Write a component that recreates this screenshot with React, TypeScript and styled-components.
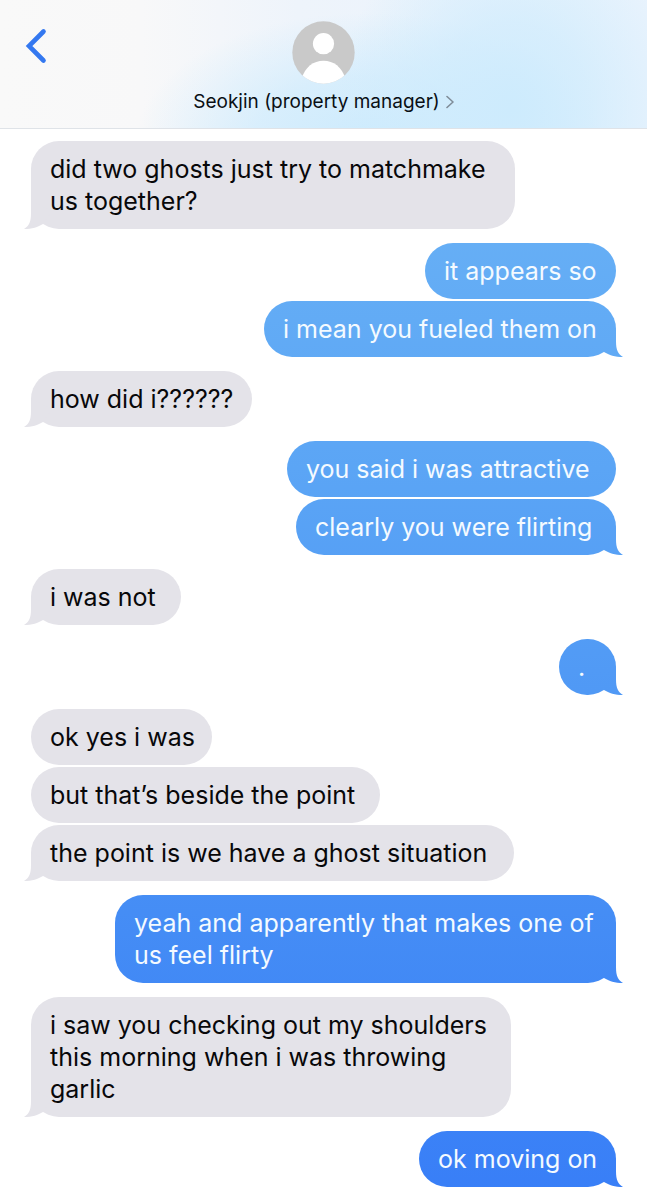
import React from "react";
import styled, { createGlobalStyle, css } from "styled-components";

const GlobalStyle = createGlobalStyle`
  *, *::before, *::after { box-sizing: border-box; }
  body {
    margin: 0;
    background: #fff;
    color: #000;
    font-family: Inter, "Liberation Sans", sans-serif;
  }
`;

const Page = styled.div`
  display: flex;
  flex-direction: column;
  min-height: 100vh;
`;

const Header = styled.header`
  display: grid;
  grid-template-columns: 64px minmax(0, 1fr) 64px;
  align-items: start;
  padding: 21px 0 15px;
  border-bottom: 1px solid #dfe3e8;
  background:
    radial-gradient(ellipse 27% 150% at 79% 85%, #cdebfd 0%, #cdebfdaa 45%, #cdebfd00 100%),
    radial-gradient(ellipse 36% 100% at 57% 110%, #cdebfd 0%, #cdebfdaa 50%, #cdebfd00 100%),
    linear-gradient(90deg, #f9f9f9 0%, #f8f8f9 22%, #eef4fb 46%, #e9f3fd 100%);
`;

const IconButton = styled.button`
  display: flex;
  justify-content: center;
  margin: 0;
  padding: 7px 0 0 8px;
  border: 0;
  background: none;
  cursor: pointer;
`;

const Contact = styled.div`
  display: flex;
  flex-direction: column;
  align-items: center;
  gap: 7px;
`;

const ContactName = styled.button`
  display: flex;
  align-items: center;
  gap: 6px;
  margin: 0;
  padding: 0;
  border: 0;
  background: none;
  color: #0a0f14;
  font-family: inherit;
  font-size: 19px;
  line-height: 22px;
  white-space: nowrap;
  cursor: pointer;
`;

const Thread = styled.main`
  display: flex;
  flex-direction: column;
  gap: 14px;
  padding: 12px 31px;
`;

const Group = styled.section<{ $sent: boolean }>`
  display: flex;
  flex-direction: column;
  align-items: ${(p) => (p.$sent ? "flex-end" : "flex-start")};
  gap: 2px;
`;

/* Sent bubbles share one gradient that spans the window. */
const sentFill = css`
  background: linear-gradient(#71b8f5 0%, #5ba5f5 39%, #458df5 76%, #387ef7 100%) fixed;
`;

const receivedFill = css`
  background: #e4e3e9;
`;

const Bubble = styled.p<{ $sent: boolean; $tail: boolean; $width: number }>`
  position: relative;
  margin: 0;
  width: ${(p) => p.$width}px;
  max-width: 100%;
  padding: 12px 12px 12px 19px;
  border-radius: 28px;
  font-size: 25px;
  line-height: 32px;
  color: ${(p) => (p.$sent ? "#f4faff" : "#08080a")};
  ${(p) => (p.$sent ? sentFill : receivedFill)}

  ${(p) =>
    p.$tail &&
    css`
      &::after {
        content: "";
        position: absolute;
        bottom: 0;
        ${p.$sent ? "right" : "left"}: -7px;
        width: 28px;
        height: 28px;
        clip-path: path(
          "${p.$sent
            ? "M21 0V12C21 21 23 25 28 28C20 28 14 26 9 23L0 10Z"
            : "M7 0V12C7 21 5 25 0 28C8 28 14 26 19 23L28 10Z"}"
        );
        ${p.$sent ? sentFill : receivedFill}
      }
    `}
`;

type Message = { text: string; width: number };
type MessageGroup = { sent: boolean; messages: Message[] };

const conversation: MessageGroup[] = [
  { sent: false, messages: [{ text: "did two ghosts just try to matchmake us together?", width: 484 }] },
  {
    sent: true,
    messages: [
      { text: "it appears so", width: 191 },
      { text: "i mean you fueled them on", width: 352 },
    ],
  },
  { sent: false, messages: [{ text: "how did i??????", width: 221 }] },
  {
    sent: true,
    messages: [
      { text: "you said i was attractive", width: 329 },
      { text: "clearly you were flirting", width: 320 },
    ],
  },
  { sent: false, messages: [{ text: "i was not", width: 150 }] },
  { sent: true, messages: [{ text: ".", width: 57 }] },
  {
    sent: false,
    messages: [
      { text: "ok yes i was", width: 181 },
      { text: "but that’s beside the point", width: 349 },
      { text: "the point is we have a ghost situation", width: 483 },
    ],
  },
  { sent: true, messages: [{ text: "yeah and apparently that makes one of us feel flirty", width: 501 }] },
  {
    sent: false,
    messages: [{ text: "i saw you checking out my shoulders this morning when i was throwing garlic", width: 480 }],
  },
  { sent: true, messages: [{ text: "ok moving on", width: 197 }] },
];

const BackIcon = () => (
  <svg width="22" height="36" viewBox="0 0 22 36" fill="none" aria-hidden="true">
    <path d="M18.5 3.5 4 18 18.5 32.5" stroke="#3478f0" strokeWidth="4.6" strokeLinecap="round" strokeLinejoin="miter" />
  </svg>
);

const Avatar = () => (
  <svg width="63" height="63" viewBox="0 0 63 63" role="img" aria-label="Contact photo">
    <defs>
      <clipPath id="avatar-disc">
        <circle cx="31.5" cy="31.5" r="31.2" />
      </clipPath>
    </defs>
    <g clipPath="url(#avatar-disc)">
      <rect width="63" height="63" fill="#c9c9c9" />
      <circle cx="31.5" cy="22.7" r="10.6" fill="#fff" />
      <path d="M9.5 58C13 46 21.5 39.8 31.5 39.8S50 46 53.5 58V63H9.5Z" fill="#fff" />
    </g>
  </svg>
);

const DisclosureIcon = () => (
  <svg width="8" height="14" viewBox="0 0 8 14" fill="none" aria-hidden="true">
    <path d="M1 1.5 7 7 1 12.5" stroke="#7f8c98" strokeWidth="1.6" strokeLinecap="round" strokeLinejoin="round" />
  </svg>
);

export default function App() {
  return (
    <Page>
      <GlobalStyle />
      <Header>
        <IconButton type="button" aria-label="Back">
          <BackIcon />
        </IconButton>
        <Contact>
          <Avatar />
          <ContactName type="button">
            Seokjin (property manager)
            <DisclosureIcon />
          </ContactName>
        </Contact>
      </Header>
      <Thread>
        {conversation.map((group, g) => (
          <Group key={g} $sent={group.sent}>
            {group.messages.map((message, m) => (
              <Bubble
                key={m}
                $sent={group.sent}
                $tail={m === group.messages.length - 1}
                $width={message.width}
              >
                {message.text}
              </Bubble>
            ))}
          </Group>
        ))}
      </Thread>
    </Page>
  );
}
